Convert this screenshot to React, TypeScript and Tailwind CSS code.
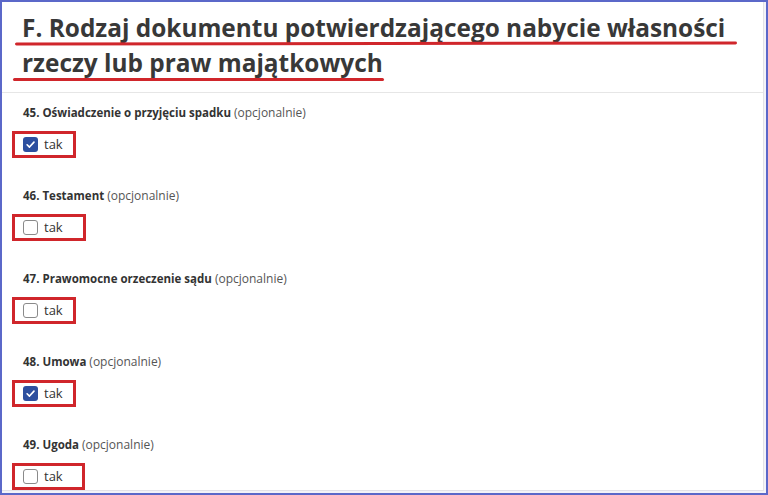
import React from "react";

interface Field {
  no: number;
  title: string;
  checked: boolean;
  boxWidth: string; // width of the highlight frame around the checkbox row
}

const fields: Field[] = [
  { no: 45, title: "Oświadczenie o przyjęciu spadku", checked: true, boxWidth: "w-[64px]" },
  { no: 46, title: "Testament", checked: false, boxWidth: "w-[74px]" },
  { no: 47, title: "Prawomocne orzeczenie sądu", checked: false, boxWidth: "w-[64px]" },
  { no: 48, title: "Umowa", checked: true, boxWidth: "w-[64px]" },
  { no: 49, title: "Ugoda", checked: false, boxWidth: "w-[73px]" },
];

const CheckBox = ({ checked }: { checked: boolean }) =>
  checked ? (
    <span className="flex h-[15px] w-[15px] items-center justify-center rounded-[3px] bg-[#2d4f9f]">
      <svg width="11" height="11" viewBox="0 0 12 12" fill="none">
        <path d="M2.3 6.3 4.9 8.8 9.8 3.4" stroke="#fff" strokeWidth="1.8" strokeLinecap="round" strokeLinejoin="round" />
      </svg>
    </span>
  ) : (
    <span className="block h-[15px] w-[15px] rounded-[3px] border border-[#8a8a8a] bg-white" />
  );

const FieldRow = ({ field }: { field: Field }) => (
  <div className="mb-[29px]">
    <p className="text-[11.5px] leading-[18px] text-[#333]">
      <span className="font-bold">
        {field.no}. {field.title}
      </span>{" "}
      <span className="text-[12px] text-[#555]">(opcjonalnie)</span>
    </p>
    <div
      className={`mt-[9px] -ml-[11px] flex h-[27px] items-center gap-[6px] border-[3px] border-[#d0262b] pl-[8px] ${field.boxWidth}`}
    >
      <CheckBox checked={field.checked} />
      <span className="text-[13px] text-[#333]">tak</span>
    </div>
  </div>
);

export default function App() {
  return (
    <div className="h-[495px] w-[768px] overflow-hidden border-2 border-[#5b68c9] bg-[#f3f3f8] font-['Open_Sans',sans-serif]">
      <div className="mr-[2px] h-[489px] overflow-hidden border-b border-r border-[#e2e2e8] bg-white">
        {/* section heading with hand-drawn red underlines */}
        <div className="relative border-b border-[#e6e6e6] pb-[12px] pl-[20px] pt-[8px]">
          <h2 className="text-[24.4px] font-bold leading-[35px] text-[#383838]">
            F. Rodzaj dokumentu potwierdzającego nabycie własności
            <br />
            rzeczy lub praw majątkowych
          </h2>
          <div className="absolute left-[13px] top-[40px] h-[3px] w-[722px] -rotate-[0.08deg] rounded-full bg-[#d0262b]" />
          <div className="absolute left-[11px] top-[76px] h-[3px] w-[371px] rounded-full bg-[#d0262b]" />
        </div>

        <div className="pl-[21px] pt-[11px]">
          {fields.map((f) => (
            <FieldRow key={f.no} field={f} />
          ))}
        </div>
      </div>
    </div>
  );
}
